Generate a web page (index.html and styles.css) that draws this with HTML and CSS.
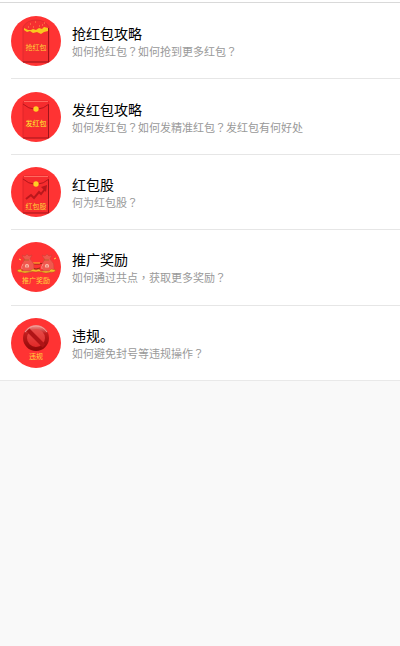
FILE: index.html
```
<!DOCTYPE html>
<html lang="zh-CN">
<head>
<meta charset="utf-8">
<meta name="viewport" content="width=device-width, initial-scale=1">
<title>红包攻略</title>
<link rel="stylesheet" href="styles.css">
</head>
<body>
<svg width="0" height="0" class="defs" aria-hidden="true">
  <defs>
    <linearGradient id="ring" x1="0" y1="0" x2="0" y2="1"><stop offset="0" stop-color="#e8807a"/><stop offset=".3" stop-color="#c01c1c"/><stop offset="1" stop-color="#940a0a"/></linearGradient>
    <linearGradient id="glass" x1="0" y1="0" x2="0" y2="1"><stop offset="0" stop-color="#e8524e"/><stop offset="1" stop-color="#e02424"/></linearGradient>
    <g id="packet">
      <path d="M12 46V11q0-2 2-2h22q2 0 2 2v35z" fill="#f62c2e"/>
      <path d="M12 45V11q0-2 2-2h22q2 0 2 2" fill="none" stroke="#d92428" stroke-width=".8"/>
      <path d="M13 9.500h24" stroke="#ff6a60"/>
      <path d="M37.500 12v34H12" fill="none" stroke="#a0141a"/>
      <path d="M12 12q6 5 11 5M38 12q-6 5-11 5" fill="none" stroke="#b3161b"/>
      <circle cx="25" cy="17" r="2.700" fill="#ffcf24"/>
    </g>
    <g id="bag">
      <path d="M-2-7l-2-4 3 1 2-2 2 2 3-1-2 4q5 4 4 10-1 4-6 4t-6-4q-1-6 3-10z" fill="#f0584e" stroke="#d03a32" stroke-width=".5"/>
      <path d="M-2-6h5" stroke="#b8602a"/>
      <path d="M-3-2q-2 3-1 5" fill="none" stroke="#ff9187"/>
      <circle cx="1" cy="0" r="2" fill="#ffc4b0"/>
      <path d="M1-1v3" stroke="#d1423c" stroke-width=".8"/>
    </g>
  </defs>
</svg>
<main>
  <ul class="list">
    <li><a class="item" href="#grab">
      <svg class="avatar" viewBox="0 0 50 50" aria-hidden="true">
        <circle cx="25" cy="25" r="25" fill="#ff3333"/>
        <path d="M12 46V11q4-7 13-7t13 7v35z" fill="#f62f30" stroke="#d92c30" stroke-width=".8"/>
        <path d="M37.500 12v34H12" fill="none" stroke="#a0141a"/>
        <path d="M13 12l4 2 3 0 2-1 3 1 3-2 3 1 2-2 4 1v3l-4 1-3 2-4-2-4 1-3-2-3 1-3-2z" fill="#f8c81e"/>
        <path d="M19 8h1M24 6h1M31 9h1M22 11h1M28 10h1M17 11h1M33 7h1" stroke="#ff9650"/>
        <text class="caption" x="25" y="34">抢红包</text>
      </svg>
      <span class="copy"><span class="title">抢红包攻略</span><span class="desc" lang="zh-TW">如何抢红包？如何抢到更多红包？</span></span>
    </a></li>
    <li><a class="item" href="#send">
      <svg class="avatar" viewBox="0 0 50 50" aria-hidden="true">
        <circle cx="25" cy="25" r="25" fill="#ff3333"/>
        <use href="#packet"/>
        <text class="caption bright" x="25" y="34">发红包</text>
      </svg>
      <span class="copy"><span class="title">发红包攻略</span><span class="desc" lang="zh-TW">如何发红包？如何发精准红包？发红包有何好处</span></span>
    </a></li>
    <li><a class="item" href="#share">
      <svg class="avatar" viewBox="0 0 50 50" aria-hidden="true">
        <circle cx="25" cy="25" r="25" fill="#ff3333"/>
        <use href="#packet"/>
        <path d="M15 32l5-4 3 3 5-6 2 2 4-5" fill="none" stroke="#b9181c" stroke-width="2"/>
        <path d="M30 20l6-2-1 7z" fill="#b9181c"/>
        <text class="caption" x="25" y="42">红包股</text>
      </svg>
      <span class="copy"><span class="title">红包股</span><span class="desc" lang="zh-TW">何为红包股？</span></span>
    </a></li>
    <li><a class="item" href="#reward">
      <svg class="avatar" viewBox="0 0 50 50" aria-hidden="true">
        <circle cx="25" cy="25" r="25" fill="#ff3333"/>
        <path d="M19 21l5 1h4l5-1M22 26l3 1 4-1" fill="none" stroke="#962515"/>
        <path d="M22 21h7" stroke="#ffc22b"/>
        <use href="#bag" x="15" y="24"/>
        <use href="#bag" x="35" y="24"/>
        <path d="M6 28l4-1 1 2h8l3-2 3 1 3-1 2 2h8l2-2 5 1q-2 3-6 2-4 2-8 0-4-1-6 0-4-1-7 0-4 2-8 0-3 1-4-2z" fill="#f8bd28" stroke="#a84818" stroke-width=".4"/>
        <path d="M8 17l2 1M43 17l2-1" stroke="#ffd443"/>
        <text class="caption" x="25" y="41">推广奖励</text>
      </svg>
      <span class="copy"><span class="title">推广奖励</span><span class="desc" lang="zh-TW">如何通过共点，获取更多奖励？</span></span>
    </a></li>
    <li><a class="item" href="#rules">
      <svg class="avatar" viewBox="0 0 50 50" aria-hidden="true">
        <circle cx="25" cy="25" r="25" fill="#ff3333"/>
        <circle cx="25" cy="20" r="11" fill="url(#glass)" stroke="url(#ring)" stroke-width="4"/>
        <path d="M17 12l16 16" stroke="#b01416" stroke-width="4"/>
        <path d="M14 14q4-6 11-6t11 6" fill="none" stroke="#f5a39e" stroke-width=".9"/>
        <text class="caption" x="25" y="41">违规</text>
      </svg>
      <span class="copy"><span class="title">违规。</span><span class="desc" lang="zh-TW">如何避免封号等违规操作？</span></span>
    </a></li>
  </ul>
</main>
</body>
</html>
```
FILE: styles.css
```
* { box-sizing: border-box; }

body {
  margin: 0;
  background: #f9f9f9;
  font-family: "Noto Sans CJK SC", sans-serif;
}

.defs { position: absolute; }

main { padding-top: 2px; background: #fff; }

/* Five equal rows share the height of the list. */
.list {
  display: grid;
  grid-auto-rows: 1fr;
  min-height: 379px;
  margin: 0;
  padding: 0;
  list-style: none;
  border-top: 1px solid #d9d9d9;
  border-bottom: 1px solid #e9e9e9;
}

.list li { display: grid; padding-left: 11px; }

.item {
  display: flex;
  align-items: center;
  gap: 11px;
  color: #000;
  text-decoration: none;
}

.list li + li .item { border-top: 1px solid #e6e6e6; }

.avatar { flex: none; width: 50px; height: 50px; }

.caption {
  font-size: 7px;
  fill: #ffd23a;
  text-anchor: middle;
}

.bright { fill: #fff02e; }

.copy { display: flex; flex-direction: column; min-width: 0; }

.title { font-size: 14px; line-height: 20px; }

.desc {
  font-family: "Noto Sans CJK TC", sans-serif;
  font-size: 11px;
  line-height: 16px;
  color: #999;
}
```
